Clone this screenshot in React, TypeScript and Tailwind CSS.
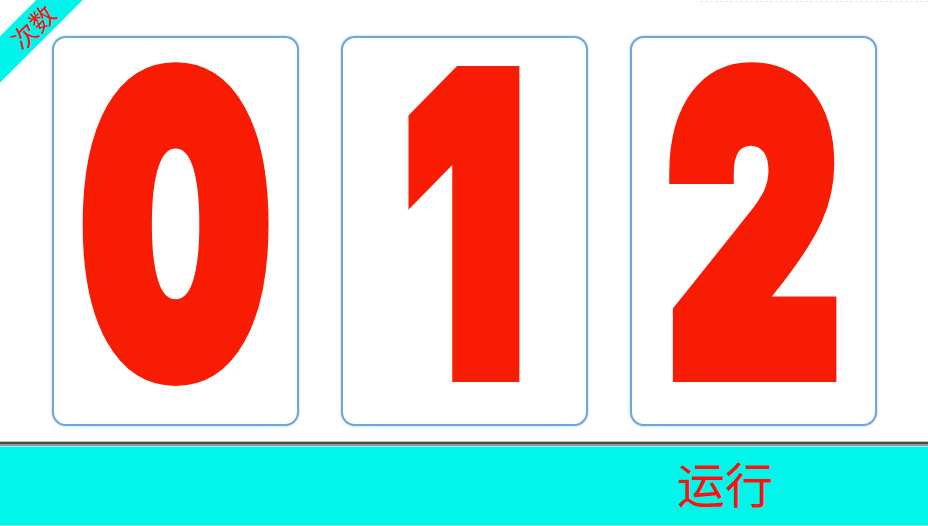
export default function App() {
  const digits = ["0", "1", "2"];
  return (
    <div className="w-[928px] h-[526px] bg-white relative overflow-hidden flex flex-col">
      {/* corner ribbon */}
      <div className="absolute left-[-50px] top-[13px] w-[160px] h-[33px] bg-[#00f5ea] -rotate-45 flex items-center justify-center z-10">
        <span className="text-[#ff1010] text-[25px] leading-none font-['Noto_Sans_CJK_SC',sans-serif] ml-[8px]">次数</span>
      </div>
      {/* faint dashed top line */}
      <div className="absolute top-[1px] left-[700px] right-0 border-t border-dashed border-[#e6e6e6]" />

      <div className="h-[441px] flex gap-[42px] pl-[52px] pt-[36px]">
        {digits.map((d) => (
          <div
            key={d}
            className="w-[247px] h-[390px] rounded-[14px] border-2 border-[#6ea7dc] shadow-[0_0_2px_#8dbbe6] bg-white flex items-center justify-center"
          >
            <span className="inline-block scale-x-[0.66] -translate-y-[6px] text-[#f81c04] text-[404px] leading-[0.9] font-black font-['Inter',sans-serif] [-webkit-text-stroke:22px_#f81c04]">
              {d}
            </span>
          </div>
        ))}
      </div>

      {/* bottom status bar */}
      <div className="h-[1px] bg-[#bdbdbd]" />
      <div className="h-[2px] bg-[#4a4a4a]" />
      <div className="h-[2px] bg-[#9a9a9a]" />
      <div className="flex-1 bg-[#00f6e9] border-t border-[#8ffcf5] border-b border-b-[#9adad6] flex items-center pl-[677px]">
        <span className="text-[#ff1010] text-[48px] leading-none font-['Noto_Sans_CJK_SC',sans-serif] -mt-[8px]">运行</span>
      </div>
    </div>
  );
}
